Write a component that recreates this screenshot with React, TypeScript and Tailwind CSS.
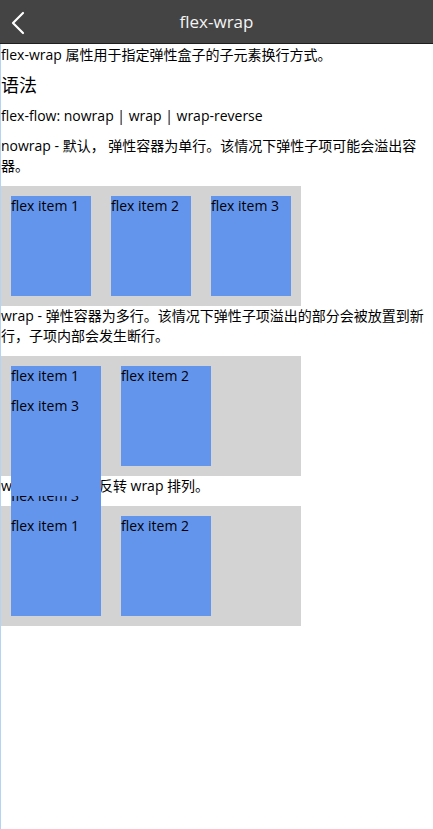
import React from "react"

const font = { fontFamily: '"Open Sans", "Noto Sans CJK SC", sans-serif' }

const Item = ({ label }: { label: string }) => (
    <div className="w-[90px] h-[100px] m-[10px] bg-[#6495ed] text-[14px] leading-[20px] text-black">
        {label}
    </div>
)

const Box = ({ wrap }: { wrap: "nowrap" | "wrap" | "reverse" }) => {
    const cls =
        wrap === "nowrap"
            ? "flex flex-nowrap"
            : wrap === "wrap"
              ? "flex flex-wrap"
              : "flex flex-wrap-reverse"
    return (
        <div className={`${cls} w-[300px] h-[120px] bg-[#d3d3d3]`}>
            <Item label="flex item 1" />
            <Item label="flex item 2" />
            <Item label="flex item 3" />
        </div>
    )
}

const App: React.FC = () => {
    return (
        <div className="w-[433px] min-h-[829px] bg-white" style={font}>
            <div className="relative flex items-center justify-center h-[44px] bg-[#444444] border-b border-[#1e1e1e]">
                <button className="absolute left-[9px] top-[11px] w-[18px] h-[24px] flex items-center justify-center">
                    <svg width="16" height="24" viewBox="0 0 16 24" fill="none">
                        <path
                            d="M13 2 L3 12 L13 22"
                            stroke="#ffffff"
                            strokeWidth="2.2"
                            strokeLinecap="round"
                            strokeLinejoin="round"
                        />
                    </svg>
                </button>
                <h1 className="text-[17px] leading-[20px] text-[#f4f4f4] font-normal">
                    flex-wrap
                </h1>
            </div>
            <div className="border-l border-[#b5d3f3] min-h-[785px] pt-[1px] text-[14px] leading-[20px] text-black">
                <p className="mb-[10px]">flex-wrap 属性用于指定弹性盒子的子元素换行方式。</p>
                <h2 className="text-[18px] leading-[21px] font-normal mb-[10px]">语法</h2>
                <p className="mb-[10px]">flex-flow: nowrap | wrap | wrap-reverse</p>
                <p className="mb-[10px]">
                    nowrap - 默认， 弹性容器为单行。该情况下弹性子项可能会溢出容器。
                </p>
                <Box wrap="nowrap" />
                <p className="mb-[10px]">
                    wrap - 弹性容器为多行。该情况下弹性子项溢出的部分会被放置到新行，子项内部会发生断行。
                </p>
                <Box wrap="wrap" />
                <p className="mb-[10px]">wrap-reverse - 反转 wrap 排列。</p>
                <Box wrap="reverse" />
            </div>
        </div>
    )
}

export default App
